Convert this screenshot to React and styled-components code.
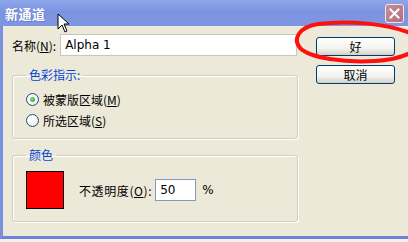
import React from "react";
import styled, { createGlobalStyle } from "styled-components";

const Global = createGlobalStyle`
  html, body { margin: 0; padding: 0; background: #f2efe6; }
  body { font-family: Tahoma, "DejaVu Sans", "Noto Sans CJK SC", sans-serif; font-size: 12px; color: #000; }
`;

const Window = styled.div`
  position: relative;
  width: 408px;
  height: 242px;
  display: flex;
  flex-direction: column;
  overflow: hidden;
  background: #f3f1ea;
`;

const TitleBar = styled.div`
  height: 26px;
  flex: none;
  display: flex;
  align-items: center;
  justify-content: space-between;
  padding: 0 4px 0 5px;
  background: linear-gradient(to bottom, #8ea5ea 0%, #7c94e0 45%, #7f97e1 100%);
`;

const Title = styled.span`
  font-family: "Noto Sans CJK SC", sans-serif;
  font-weight: 700;
  font-size: 13px;
  color: #fff;
  text-shadow: 1px 1px 0 #6a80c8;
  letter-spacing: 0.5px;
`;

const CloseBtn = styled.div`
  width: 19px;
  height: 19px;
  box-sizing: border-box;
  border: 1px solid #f2e6ea;
  border-radius: 3px;
  background: linear-gradient(135deg, #c88c98, #b2707e);
  display: flex;
  align-items: center;
  justify-content: center;
`;

const Body = styled.div`
  flex: none;
  height: 213px;
  box-sizing: border-box;
  background: #ece9d8;
  border-left: 3px solid #7a8fdc;
  border-bottom: 3px solid #6f82dc;
  display: flex;
  padding: 8px 0 0 9px;
  gap: 18px;
`;

const LeftCol = styled.div`
  width: 286px;
  display: flex;
  flex-direction: column;
`;

const NameRow = styled.div`
  display: flex;
  align-items: center;
  height: 22px;
`;

const Label = styled.span`
  font-family: "Noto Sans CJK SC", sans-serif;
  font-size: 12px;
  white-space: nowrap;
  letter-spacing: ${(p) => p.$ls || 0}px;
  u { text-decoration: underline; }
`;

const TextInput = styled.div`
  box-sizing: border-box;
  height: 22px;
  width: ${(p) => p.$w}px;
  margin-left: ${(p) => p.$ml}px;
  border: 1px solid ${(p) => p.$border || "#b9b9b0"};
  background: #fff;
  font-family: "DejaVu Sans", sans-serif;
  font-size: 12px;
  padding: 2px 4px;
  line-height: 16px;
`;

const Group = styled.fieldset`
  margin: ${(p) => p.$mt}px 0 0 0;
  padding: 0 0 0 13px;
  height: ${(p) => p.$h}px;
  box-sizing: border-box;
  border: 1px solid #d0d0bf;
  border-radius: 3px;
  box-shadow: inset 1px 1px 0 #fff, 1px 1px 0 #fff;
`;

const Legend = styled.legend`
  font-family: "Noto Sans CJK SC", sans-serif;
  font-size: 12px;
  color: #0046d5;
  padding: 0 3px;
  line-height: 14px;
`;

const RadioList = styled.div`
  display: flex;
  flex-direction: column;
  gap: 5px;
  padding-top: 9px;
`;

const RadioRow = styled.div`
  display: flex;
  align-items: center;
  gap: 4px;
  height: 16px;
`;

const RadioCircle = styled.span`
  width: 13px;
  height: 13px;
  box-sizing: border-box;
  border-radius: 50%;
  border: 1px solid #1c5180;
  background: radial-gradient(circle at 40% 40%, #ffffff 30%, #dcdcd5 100%);
  display: flex;
  align-items: center;
  justify-content: center;
  &::after {
    content: "";
    display: ${(p) => (p.$on ? "block" : "none")};
    width: 5px;
    height: 5px;
    border-radius: 50%;
    background: radial-gradient(circle at 40% 40%, #7be07b, #21a121);
  }
`;

const ColorRow = styled.div`
  display: flex;
  align-items: center;
  padding-top: 9px;
`;

const Swatch = styled.div`
  width: 38px;
  height: 38px;
  box-sizing: border-box;
  border: 1px solid #000;
  background: #ff0000;
  margin-right: 15px;
`;

const Percent = styled.span`
  font-family: "DejaVu Sans", sans-serif;
  font-size: 12px;
  margin-left: 6px;
`;

const RightCol = styled.div`
  display: flex;
  flex-direction: column;
  gap: 9px;
  padding-top: 3px;
`;

const Button = styled.div`
  width: 79px;
  height: 19px;
  box-sizing: border-box;
  border: 1px solid #003c74;
  border-radius: 3px;
  background: linear-gradient(to bottom, #ffffff 0%, #f3f3ef 60%, #d6d0c5 100%);
  display: flex;
  align-items: center;
  justify-content: center;
  font-family: "Noto Sans CJK SC", sans-serif;
  font-size: 12px;
`;

const Overlay = styled.svg`
  position: absolute;
  left: 0;
  top: 0;
  pointer-events: none;
`;

export default function App() {
  return (
    <>
      <Global />
      <Window>
        <TitleBar>
          <Title>新通道</Title>
          <CloseBtn>
            <svg width="11" height="11" viewBox="0 0 11 11">
              <path d="M1.5 1.5 L9.5 9.5 M9.5 1.5 L1.5 9.5" stroke="#fff" strokeWidth="2" strokeLinecap="square" />
            </svg>
          </CloseBtn>
        </TitleBar>
        <Body>
          <LeftCol>
            <NameRow>
              <Label>名称(<u>N</u>):</Label>
              <TextInput $w={237} $ml={4} $border="#c9c7ba">Alpha 1</TextInput>
            </NameRow>
            <Group $mt={12} $h={71}>
              <Legend>色彩指示:</Legend>
              <RadioList>
                <RadioRow>
                  <RadioCircle $on />
                  <Label>被蒙版区域(<u>M</u>)</Label>
                </RadioRow>
                <RadioRow>
                  <RadioCircle />
                  <Label>所选区域(<u>S</u>)</Label>
                </RadioRow>
              </RadioList>
            </Group>
            <Group $mt={9} $h={74}>
              <Legend>颜色</Legend>
              <ColorRow>
                <Swatch />
                <Label $ls={0.6}>不透明度(<u>O</u>):</Label>
                <TextInput $w={41} $ml={3} $border="#7f9db9">50</TextInput>
                <Percent>%</Percent>
              </ColorRow>
            </Group>
          </LeftCol>
          <RightCol>
            <Button>好</Button>
            <Button>取消</Button>
          </RightCol>
        </Body>
        <Overlay width="408" height="242" viewBox="0 0 408 242">
          <path
            d="M410 33 C 388 24, 350 20, 318 24 C 300 27, 292 38, 300 48 C 310 58, 345 63, 375 61 C 392 60, 402 57, 410 53"
            fill="none"
            stroke="#ff1010"
            strokeWidth="4"
            strokeLinecap="round"
          />
          <path
            d="M58 14 L58 29 L62 25 L65 32 L67 31 L64 24 L69 24 Z"
            fill="#fff"
            stroke="#000"
            strokeWidth="1"
            strokeLinejoin="miter"
          />
        </Overlay>
      </Window>
    </>
  );
}
